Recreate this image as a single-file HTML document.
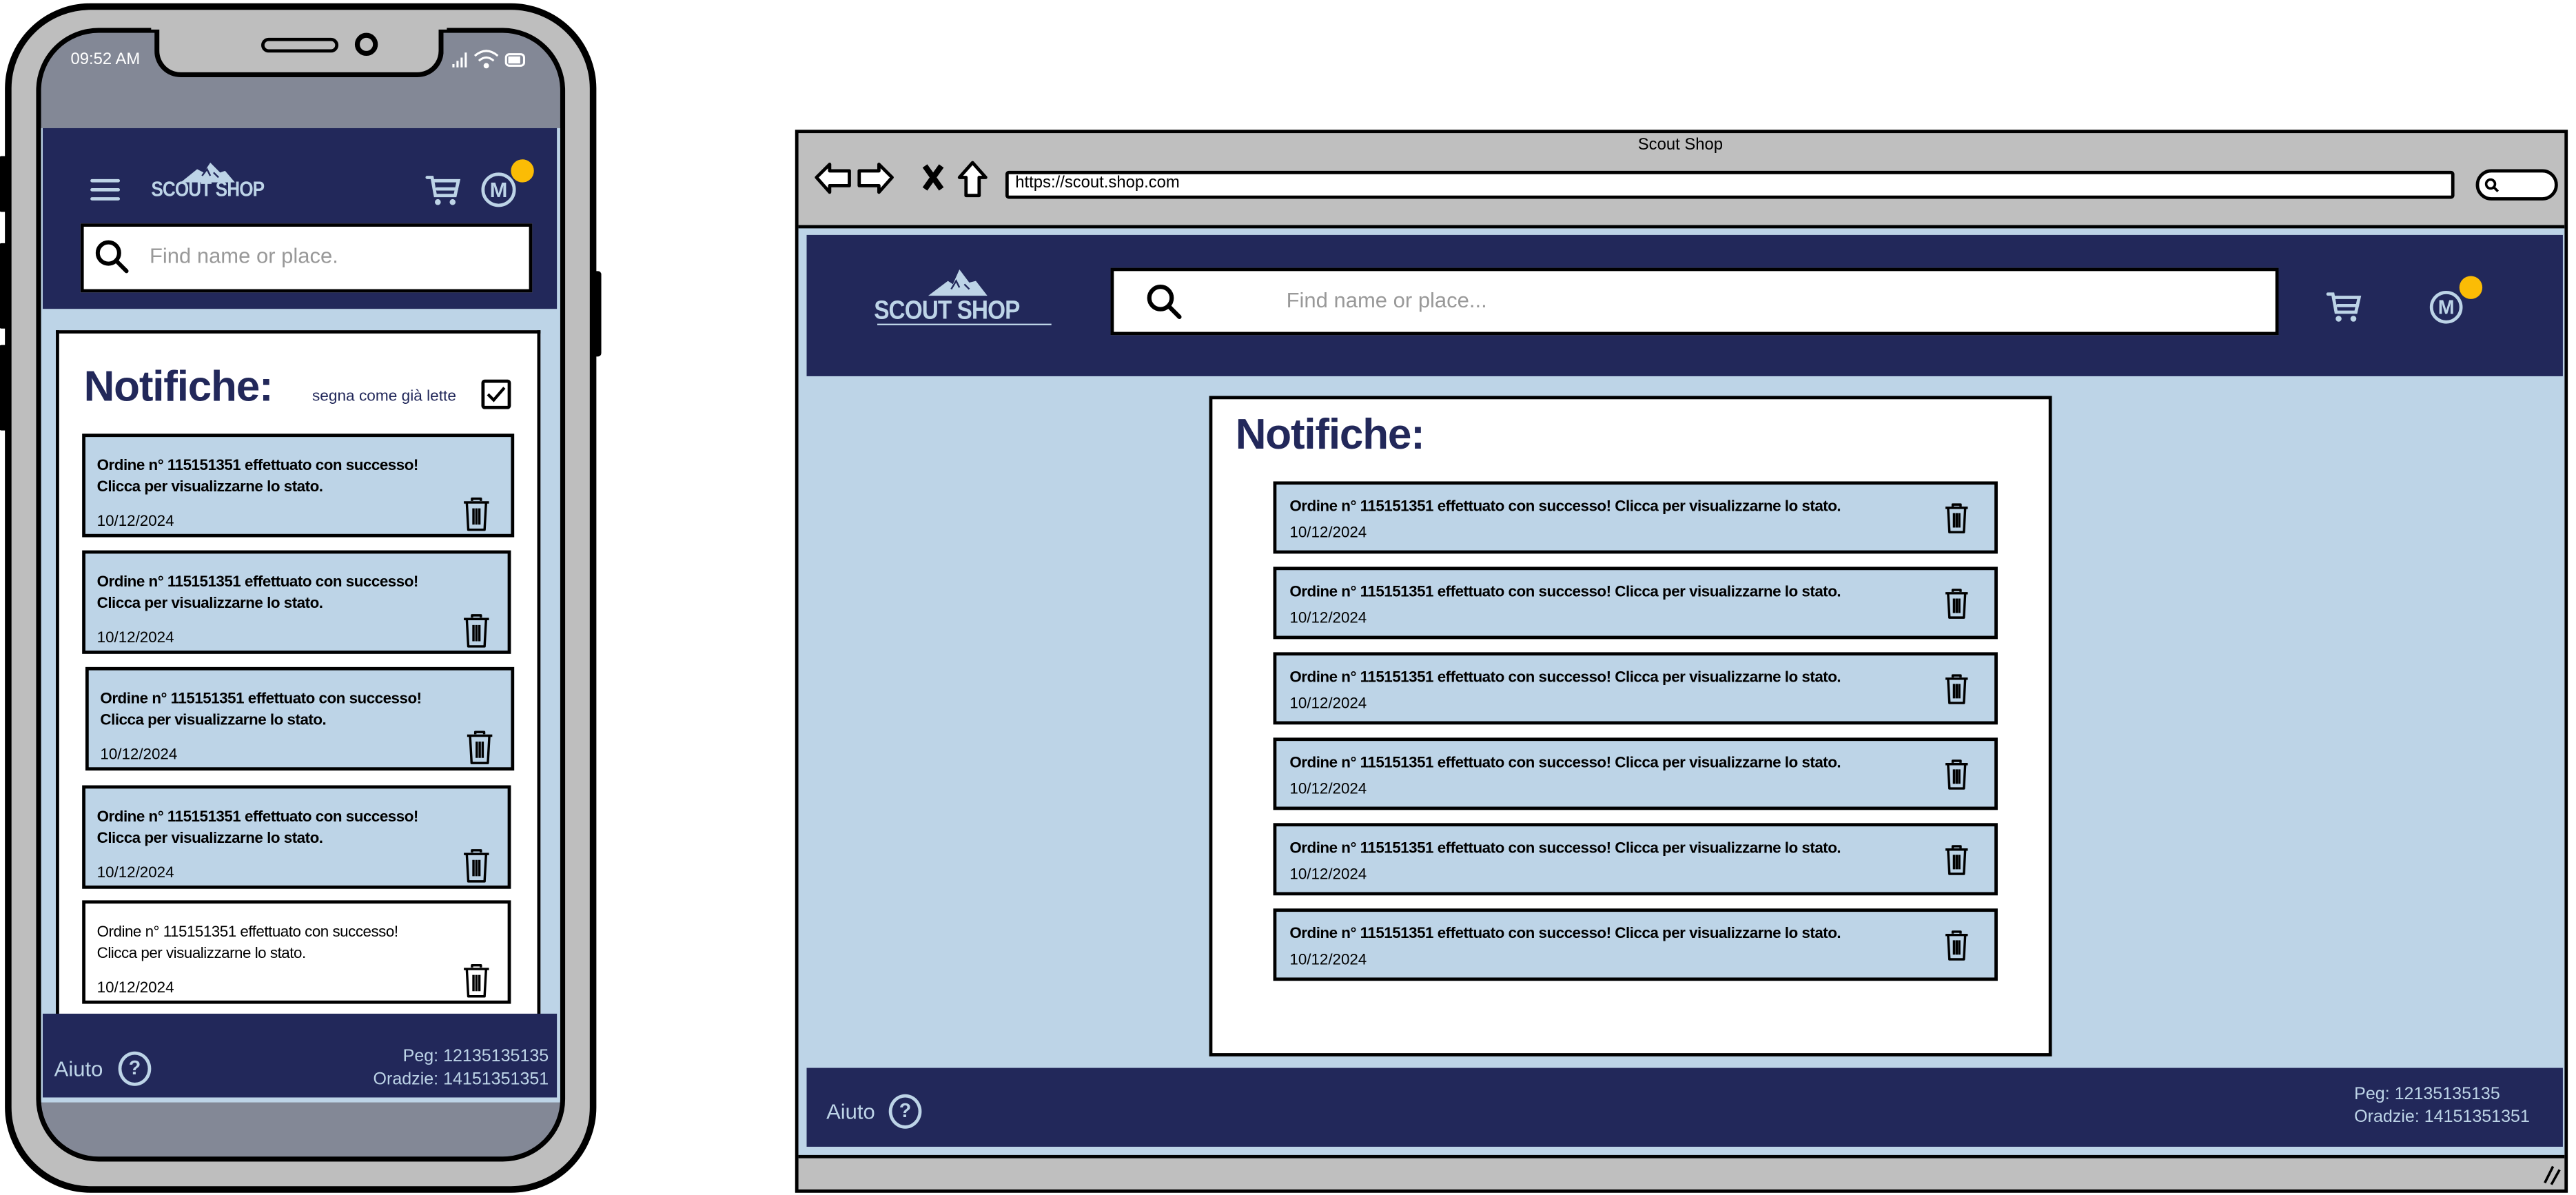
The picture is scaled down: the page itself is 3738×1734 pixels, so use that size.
<!DOCTYPE html>
<html><head><meta charset="utf-8"><style>
*{margin:0;padding:0;box-sizing:border-box}
html,body{width:3738px;height:1734px;background:#fff;overflow:hidden}
#s{position:absolute;left:0;top:0;width:1568px;height:727.4px;transform:scale(2.38393);transform-origin:0 0;font-family:"Liberation Sans",sans-serif}
.a{position:absolute}
.nv{background:#22285a}
.lb{background:#bdd4e7}
.n{position:absolute;border:2px solid #000;background:#bdd4e7;color:#000}
.pt{position:absolute;left:7px;top:10px;font-size:9.4px;font-weight:bold;line-height:13px;letter-spacing:-0.2px}
.pd{position:absolute;left:7px;top:45px;font-size:9.4px}
.dt{position:absolute;left:8px;top:7px;font-size:9.4px;font-weight:bold;letter-spacing:-0.2px}
.dd{position:absolute;left:8px;top:23px;font-size:9.4px}
.tr{position:absolute}
.bl{color:#bdd4e7}
.lg{position:absolute;font-weight:900;color:#bdd4e7;letter-spacing:-0.4px;transform:scaleY(1.15);transform-origin:0 0}
</style></head><body><div id="s">

<!-- PHONE -->
<div class="a" style="left:-1px;top:95px;width:6px;height:34px;background:#000;border-radius:2px"></div>
<div class="a" style="left:-1px;top:148px;width:6px;height:52px;background:#000;border-radius:2px"></div>
<div class="a" style="left:-1px;top:210px;width:6px;height:52px;background:#000;border-radius:2px"></div>
<div class="a" style="left:360px;top:165px;width:6px;height:52px;background:#000;border-radius:2px"></div>
<div class="a" style="left:3px;top:2px;width:360px;height:724px;background:#bebebe;border:4px solid #000;border-radius:52px"></div>
<div class="a" style="left:22px;top:17px;width:322px;height:690px;background:#838896;border:3px solid #000;border-radius:38px;overflow:hidden">
  <div class="a lb" style="left:0;top:58px;width:316px;height:593px"></div>
</div>
<!-- notch -->
<div class="a" style="left:94px;top:14px;width:176px;height:33px;background:#bebebe;border:3px solid #000;border-top:none;border-radius:0 0 16px 16px"></div>
<div class="a" style="left:92px;top:10px;width:180px;height:8px;background:#bebebe"></div>
<div class="a" style="left:159px;top:23px;width:47px;height:9px;border:2.5px solid #000;border-radius:5px;background:#bebebe"></div>
<div class="a" style="left:216px;top:20px;width:14px;height:14px;border:3px solid #000;border-radius:50%"></div>
<div class="a" style="left:43px;top:31px;color:#fff;font-size:10px">09:52 AM</div>
<svg class="a" style="left:274px;top:29px" width="48" height="14" viewBox="0 0 48 14"><g stroke="#fff" stroke-width="1.3" fill="none"><path d="M2 12V10M4.5 12V8M7 12V6M9.5 12V3"/><path d="M15 5q7-6 14 0M17.5 8q4.5-4 9 0"/><circle cx="22" cy="11" r="1" fill="#fff"/><rect x="34" y="4" width="11" height="7" rx="2"/><rect x="36" y="6" width="6" height="3" fill="#fff"/></g></svg>
<!-- phone header -->
<div class="a nv" style="left:26px;top:78px;width:313px;height:110px"></div>
<svg class="a" style="left:55px;top:108px" width="18" height="15"><g stroke="#bdd4e7" stroke-width="2" stroke-linecap="round"><path d="M1 2H17M1 7.5H17M1 13H17"/></g></svg>
<svg class="a" style="left:108px;top:98px" width="36" height="14" viewBox="0 0 36 14"><path d="M2 13L12 5L16 7L20 1L26 7L29 6L35 13Z" fill="#bdd4e7"/><path d="M15 9L18 5L20 9M22 7L25 10" stroke="#22285a" stroke-width="1" fill="none"/></svg>
<div class="lg" style="left:92px;top:109px;font-size:11px">SCOUT SHOP</div>
<svg class="a" style="left:259px;top:106px" width="22" height="20" viewBox="0 0 22 20"><g stroke="#bdd4e7" stroke-width="2" fill="none" stroke-linecap="round"><path d="M1 2H4L6 13H18L20 4H5M7 9H19"/></g><circle cx="7.5" cy="17" r="1.8" fill="#bdd4e7"/><circle cx="16.5" cy="17" r="1.8" fill="#bdd4e7"/></svg>
<div class="a" style="left:293px;top:105px;width:21px;height:21px;border:2px solid #bdd4e7;border-radius:50%;color:#bdd4e7;font-size:13px;font-weight:bold;text-align:center;line-height:17px">M</div>
<div class="a" style="left:311px;top:97px;width:14px;height:14px;border-radius:50%;background:#fbbc05"></div>
<div class="a" style="left:49px;top:136px;width:275px;height:42px;background:#fff;border:2px solid #000"></div>
<svg class="a" style="left:58px;top:146px" width="21" height="21" viewBox="0 0 21 21"><circle cx="8" cy="8" r="6.5" stroke="#000" stroke-width="2.5" fill="none"/><path d="M13 13L19 19" stroke="#000" stroke-width="2.5" stroke-linecap="round"/></svg>
<div class="a" style="left:91px;top:148px;font-size:13px;color:#999">Find name or place.</div>
<!-- phone card -->
<div class="a" style="left:34px;top:201px;width:295px;height:430px;background:#fff;border:2px solid #000;border-bottom:none"></div>
<div class="a" style="left:51px;top:220px;font-size:26px;font-weight:bold;color:#22285a;letter-spacing:-0.5px">Notifiche:</div>
<div class="a" style="left:190px;top:236px;font-size:9.5px;color:#22285a">segna come già lette</div>
<div class="a" style="left:293px;top:231px;width:18px;height:18px;border:2px solid #000;border-radius:2px"></div>
<svg class="a" style="left:296px;top:235px" width="12" height="10"><path d="M1 5L4.5 8.5L11 1" stroke="#000" stroke-width="1.8" fill="none"/></svg>

<div class="n" style="left:50px;top:264px;width:263px;height:63px"><div class="pt">Ordine n° 115151351 effettuato con successo!<br>Clicca per visualizzarne lo stato.</div><div class="pd">10/12/2024</div><svg class="tr" style="left:229px;top:36px" width="18" height="22" viewBox="0 0 20 24"><g stroke="#000" stroke-width="1.6" fill="none" stroke-linejoin="round"><path d="M7 3V1.5H13V3M1.5 4H18.5M3.5 4.5L4.5 22.5H15.5L16.5 4.5M8 8V19M10 8V19M12 8V19"/></g></svg></div>
<div class="n" style="left:50px;top:335px;width:261px;height:63px"><div class="pt">Ordine n° 115151351 effettuato con successo!<br>Clicca per visualizzarne lo stato.</div><div class="pd">10/12/2024</div><svg class="tr" style="left:229px;top:36px" width="18" height="22" viewBox="0 0 20 24"><g stroke="#000" stroke-width="1.6" fill="none" stroke-linejoin="round"><path d="M7 3V1.5H13V3M1.5 4H18.5M3.5 4.5L4.5 22.5H15.5L16.5 4.5M8 8V19M10 8V19M12 8V19"/></g></svg></div>
<div class="n" style="left:52px;top:406px;width:261px;height:63px"><div class="pt">Ordine n° 115151351 effettuato con successo!<br>Clicca per visualizzarne lo stato.</div><div class="pd">10/12/2024</div><svg class="tr" style="left:229px;top:36px" width="18" height="22" viewBox="0 0 20 24"><g stroke="#000" stroke-width="1.6" fill="none" stroke-linejoin="round"><path d="M7 3V1.5H13V3M1.5 4H18.5M3.5 4.5L4.5 22.5H15.5L16.5 4.5M8 8V19M10 8V19M12 8V19"/></g></svg></div>
<div class="n" style="left:50px;top:478px;width:261px;height:63px"><div class="pt">Ordine n° 115151351 effettuato con successo!<br>Clicca per visualizzarne lo stato.</div><div class="pd">10/12/2024</div><svg class="tr" style="left:229px;top:36px" width="18" height="22" viewBox="0 0 20 24"><g stroke="#000" stroke-width="1.6" fill="none" stroke-linejoin="round"><path d="M7 3V1.5H13V3M1.5 4H18.5M3.5 4.5L4.5 22.5H15.5L16.5 4.5M8 8V19M10 8V19M12 8V19"/></g></svg></div>
<div class="n" style="left:50px;top:548px;width:261px;height:63px;background:#fff"><div class="pt" style="font-weight:normal">Ordine n° 115151351 effettuato con successo!<br>Clicca per visualizzarne lo stato.</div><div class="pd">10/12/2024</div><svg class="tr" style="left:229px;top:36px" width="18" height="22" viewBox="0 0 20 24"><g stroke="#000" stroke-width="1.6" fill="none" stroke-linejoin="round"><path d="M7 3V1.5H13V3M1.5 4H18.5M3.5 4.5L4.5 22.5H15.5L16.5 4.5M8 8V19M10 8V19M12 8V19"/></g></svg></div>
<!-- phone footer -->
<div class="a nv" style="left:26px;top:617px;width:313px;height:51px"></div>
<div class="a bl" style="left:33px;top:643px;font-size:13px">Aiuto</div>
<div class="a bl" style="left:72px;top:640px;width:20px;height:21px;border:2px solid #bdd4e7;border-radius:50%;font-size:12px;font-weight:bold;text-align:center;line-height:17px">?</div>
<div class="a bl" style="left:200px;top:636px;width:134px;text-align:right;font-size:10.5px;line-height:14px">Peg: 12135135135<br>Oradzie: 14151351351</div>

<!-- BROWSER -->
<div class="a" style="left:484px;top:79px;width:1079px;height:647px;background:#bfbfbf;border:2px solid #000"></div>
<div class="a" style="left:486px;top:137px;width:1075px;height:568px;background:#bdd4e7;border-top:2px solid #000;border-bottom:2px solid #000"></div>
<div class="a" style="left:997px;top:83px;font-size:10px">Scout Shop</div>
<svg class="a" style="left:495px;top:97px" width="112" height="24" viewBox="0 0 112 24"><g stroke="#000" stroke-width="2" fill="#fff" stroke-linejoin="round"><path d="M2 11L10 3V7H22V16H10V20Z"/><path d="M48 11L40 3V7H28V16H40V20Z"/><path d="M97 2L105 11H101V22H93V11H89Z"/></g><path d="M68 4L78 18M78 4L68 18" stroke="#000" stroke-width="3.5"/></svg>
<div class="a" style="left:612px;top:104px;width:882px;height:17px;background:#fff;border:2px solid #000;border-radius:2px"></div>
<div class="a" style="left:618px;top:106px;font-size:10px">https://scout.shop.com</div>
<div class="a" style="left:1507px;top:103px;width:50px;height:19px;background:#fff;border:2px solid #000;border-radius:10px"></div>
<svg class="a" style="left:1512px;top:108px" width="10" height="10"><circle cx="4" cy="4" r="2.7" stroke="#000" stroke-width="1.5" fill="none"/><path d="M6 6L8.5 8.5" stroke="#000" stroke-width="1.5"/></svg>
<!-- desktop header -->
<div class="a nv" style="left:491px;top:143px;width:1069px;height:86px"></div>
<svg class="a" style="left:563px;top:163px" width="40" height="18" viewBox="0 0 40 18"><path d="M2 17L14 8L17 10L21 1L27 9L31 8L38 17Z" fill="#bdd4e7"/><path d="M16 13L19 8L21 12M24 10L27 13" stroke="#22285a" stroke-width="1" fill="none"/></svg>
<div class="lg" style="left:532px;top:179px;font-size:14px">SCOUT SHOP</div>
<div class="a" style="left:534px;top:197px;width:106px;height:1px;background:#bdd4e7"></div>
<div class="a" style="left:676px;top:163px;width:711px;height:41px;background:#fff;border:2px solid #000"></div>
<svg class="a" style="left:698px;top:173px" width="22" height="22" viewBox="0 0 21 21"><circle cx="8" cy="8" r="6.5" stroke="#000" stroke-width="2.5" fill="none"/><path d="M13 13L19 19" stroke="#000" stroke-width="2.5" stroke-linecap="round"/></svg>
<div class="a" style="left:783px;top:175px;font-size:13px;color:#999">Find name or place...</div>
<svg class="a" style="left:1416px;top:177px" width="22" height="20" viewBox="0 0 22 20"><g stroke="#bdd4e7" stroke-width="2" fill="none" stroke-linecap="round"><path d="M1 2H4L6 13H18L20 4H5M7 9H19"/></g><circle cx="7.5" cy="17" r="1.8" fill="#bdd4e7"/><circle cx="16.5" cy="17" r="1.8" fill="#bdd4e7"/></svg>
<div class="a" style="left:1479px;top:177px;width:20px;height:20px;border:2px solid #bdd4e7;border-radius:50%;color:#bdd4e7;font-size:12px;font-weight:bold;text-align:center;line-height:16px">M</div>
<div class="a" style="left:1497px;top:168px;width:14px;height:14px;border-radius:50%;background:#fbbc05"></div>
<!-- desktop card -->
<div class="a" style="left:736px;top:241px;width:513px;height:402px;background:#fff;border:2px solid #000"></div>
<div class="a" style="left:752px;top:249px;font-size:26px;font-weight:bold;color:#22285a;letter-spacing:-0.5px">Notifiche:</div>

<div class="n" style="left:775px;top:293px;width:441px;height:44px"><div class="dt">Ordine n° 115151351 effettuato con successo! Clicca per visualizzarne lo stato.</div><div class="dd">10/12/2024</div><svg class="tr" style="left:406px;top:10px" width="16" height="21" viewBox="0 0 20 24"><g stroke="#000" stroke-width="1.8" fill="none" stroke-linejoin="round"><path d="M7 3V1.5H13V3M1.5 4H18.5M3.5 4.5L4.5 22.5H15.5L16.5 4.5M8 8V19M10 8V19M12 8V19"/></g></svg></div>
<div class="n" style="left:775px;top:345px;width:441px;height:44px"><div class="dt">Ordine n° 115151351 effettuato con successo! Clicca per visualizzarne lo stato.</div><div class="dd">10/12/2024</div><svg class="tr" style="left:406px;top:10px" width="16" height="21" viewBox="0 0 20 24"><g stroke="#000" stroke-width="1.8" fill="none" stroke-linejoin="round"><path d="M7 3V1.5H13V3M1.5 4H18.5M3.5 4.5L4.5 22.5H15.5L16.5 4.5M8 8V19M10 8V19M12 8V19"/></g></svg></div>
<div class="n" style="left:775px;top:397px;width:441px;height:44px"><div class="dt">Ordine n° 115151351 effettuato con successo! Clicca per visualizzarne lo stato.</div><div class="dd">10/12/2024</div><svg class="tr" style="left:406px;top:10px" width="16" height="21" viewBox="0 0 20 24"><g stroke="#000" stroke-width="1.8" fill="none" stroke-linejoin="round"><path d="M7 3V1.5H13V3M1.5 4H18.5M3.5 4.5L4.5 22.5H15.5L16.5 4.5M8 8V19M10 8V19M12 8V19"/></g></svg></div>
<div class="n" style="left:775px;top:449px;width:441px;height:44px"><div class="dt">Ordine n° 115151351 effettuato con successo! Clicca per visualizzarne lo stato.</div><div class="dd">10/12/2024</div><svg class="tr" style="left:406px;top:10px" width="16" height="21" viewBox="0 0 20 24"><g stroke="#000" stroke-width="1.8" fill="none" stroke-linejoin="round"><path d="M7 3V1.5H13V3M1.5 4H18.5M3.5 4.5L4.5 22.5H15.5L16.5 4.5M8 8V19M10 8V19M12 8V19"/></g></svg></div>
<div class="n" style="left:775px;top:501px;width:441px;height:44px"><div class="dt">Ordine n° 115151351 effettuato con successo! Clicca per visualizzarne lo stato.</div><div class="dd">10/12/2024</div><svg class="tr" style="left:406px;top:10px" width="16" height="21" viewBox="0 0 20 24"><g stroke="#000" stroke-width="1.8" fill="none" stroke-linejoin="round"><path d="M7 3V1.5H13V3M1.5 4H18.5M3.5 4.5L4.5 22.5H15.5L16.5 4.5M8 8V19M10 8V19M12 8V19"/></g></svg></div>
<div class="n" style="left:775px;top:553px;width:441px;height:44px"><div class="dt">Ordine n° 115151351 effettuato con successo! Clicca per visualizzarne lo stato.</div><div class="dd">10/12/2024</div><svg class="tr" style="left:406px;top:10px" width="16" height="21" viewBox="0 0 20 24"><g stroke="#000" stroke-width="1.8" fill="none" stroke-linejoin="round"><path d="M7 3V1.5H13V3M1.5 4H18.5M3.5 4.5L4.5 22.5H15.5L16.5 4.5M8 8V19M10 8V19M12 8V19"/></g></svg></div>
<!-- desktop footer -->
<div class="a nv" style="left:491px;top:650px;width:1069px;height:48px"></div>
<div class="a bl" style="left:503px;top:669px;font-size:13px">Aiuto</div>
<div class="a bl" style="left:541px;top:666px;width:20px;height:21px;border:2px solid #bdd4e7;border-radius:50%;font-size:12px;font-weight:bold;text-align:center;line-height:17px">?</div>
<div class="a bl" style="left:1433px;top:659px;font-size:10.5px;line-height:14px">Peg: 12135135135<br>Oradzie: 14151351351</div>
<svg class="a" style="left:1547px;top:708px" width="12" height="14"><path d="M2 12L7 2M6 13L11 4" stroke="#000" stroke-width="1.5"/></svg>
</div></body></html>
